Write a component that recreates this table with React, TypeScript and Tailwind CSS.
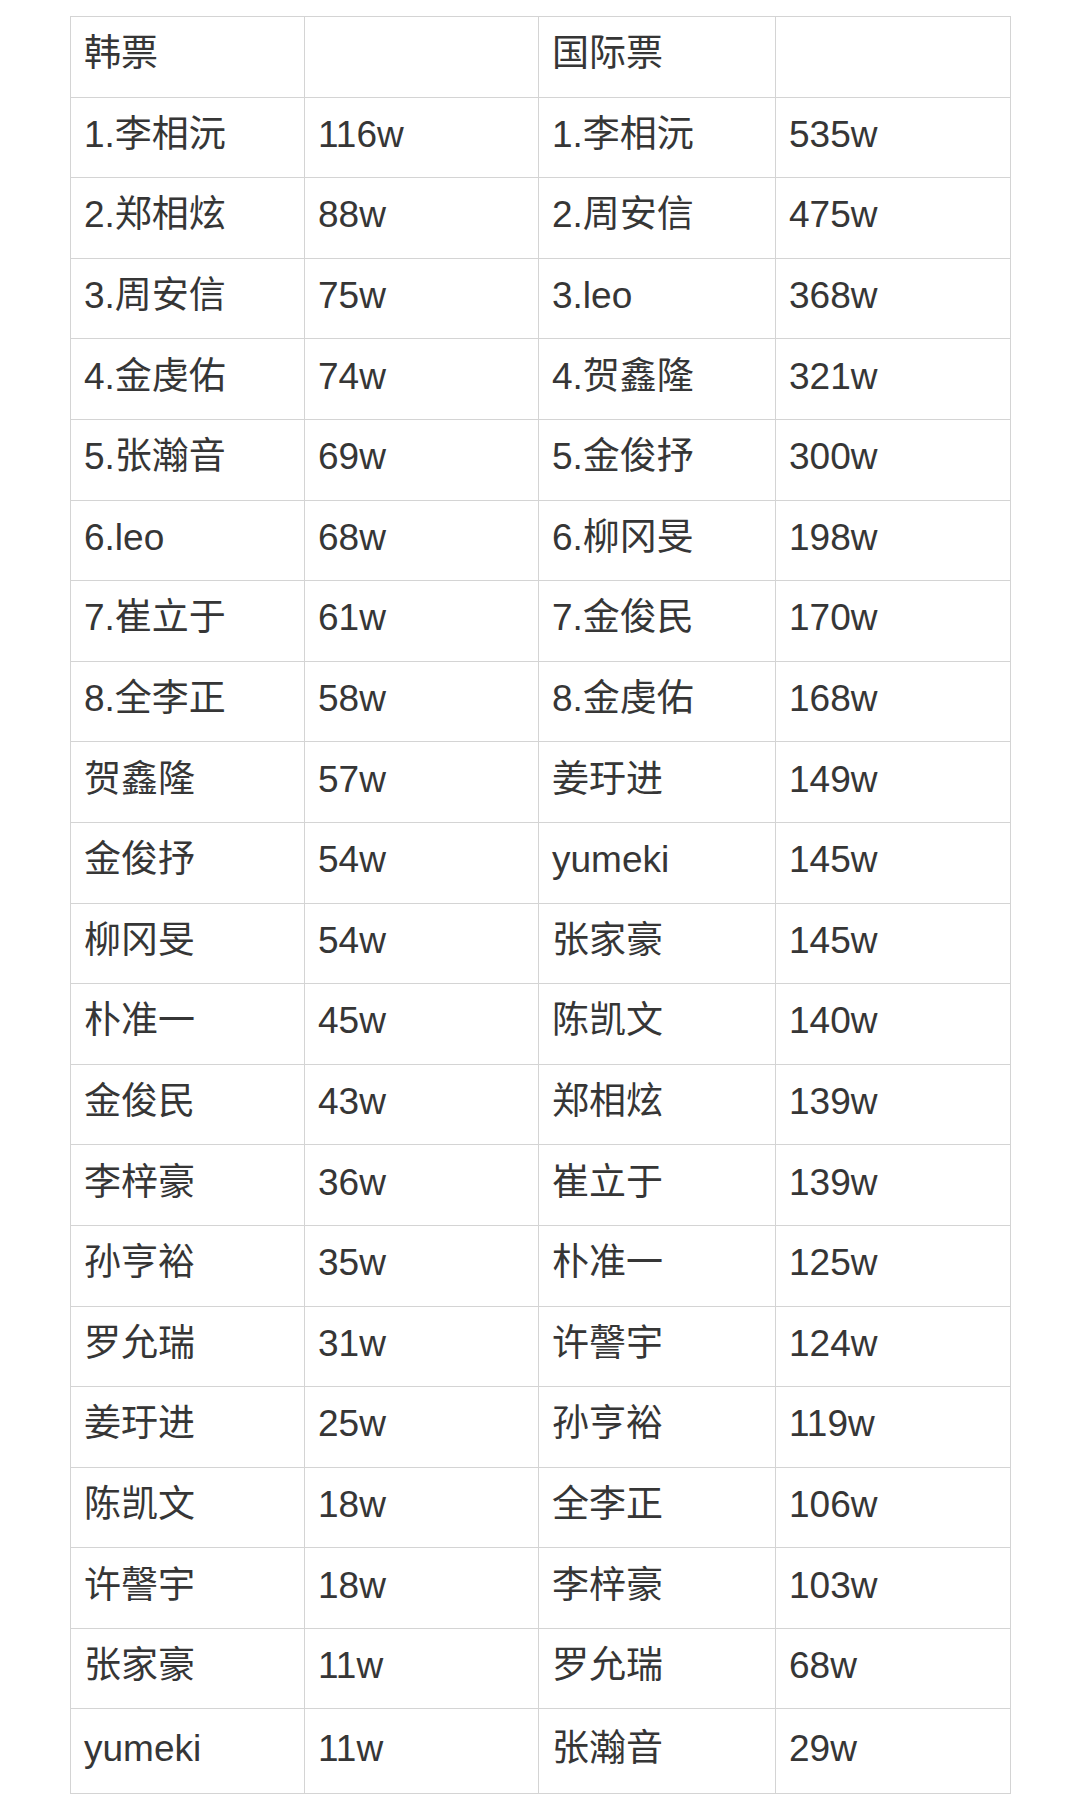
const rows: [string, string, string, string][] = [
  ['韩票', '', '国际票', ''],
  ['1.李相沅', '116w', '1.李相沅', '535w'],
  ['2.郑相炫', '88w', '2.周安信', '475w'],
  ['3.周安信', '75w', '3.leo', '368w'],
  ['4.金虔佑', '74w', '4.贺鑫隆', '321w'],
  ['5.张瀚音', '69w', '5.金俊抒', '300w'],
  ['6.leo', '68w', '6.柳冈旻', '198w'],
  ['7.崔立于', '61w', '7.金俊民', '170w'],
  ['8.全李正', '58w', '8.金虔佑', '168w'],
  ['贺鑫隆', '57w', '姜玗进', '149w'],
  ['金俊抒', '54w', 'yumeki', '145w'],
  ['柳冈旻', '54w', '张家豪', '145w'],
  ['朴准一', '45w', '陈凯文', '140w'],
  ['金俊民', '43w', '郑相炫', '139w'],
  ['李梓豪', '36w', '崔立于', '139w'],
  ['孙亨裕', '35w', '朴准一', '125w'],
  ['罗允瑞', '31w', '许謦宇', '124w'],
  ['姜玗进', '25w', '孙亨裕', '119w'],
  ['陈凯文', '18w', '全李正', '106w'],
  ['许謦宇', '18w', '李梓豪', '103w'],
  ['张家豪', '11w', '罗允瑞', '68w'],
  ['yumeki', '11w', '张瀚音', '29w'],
];

export default function App() {
  return (
    <div className="min-h-[1809px] w-[1080px] bg-white pt-[16px] pl-[70px] text-[#363636] [font-family:'Liberation_Sans','Noto_Sans_CJK_SC',sans-serif]">
      <div className="grid w-[941px] grid-cols-[234px_234px_237px_235px] border-l border-t border-[#d4d4d4]">
        {rows.map((r, i) =>
          r.map((cell, j) => (
            <div
              key={`${i}-${j}`}
              className={`flex items-center border-b border-r border-[#d4d4d4] pl-[13px] pb-[6px] text-[37px] leading-none ${
                i === rows.length - 1 ? 'h-[85px]' : 'h-[80.6px]'
              }`}
            >
              {cell}
            </div>
          ))
        )}
      </div>
    </div>
  );
}
